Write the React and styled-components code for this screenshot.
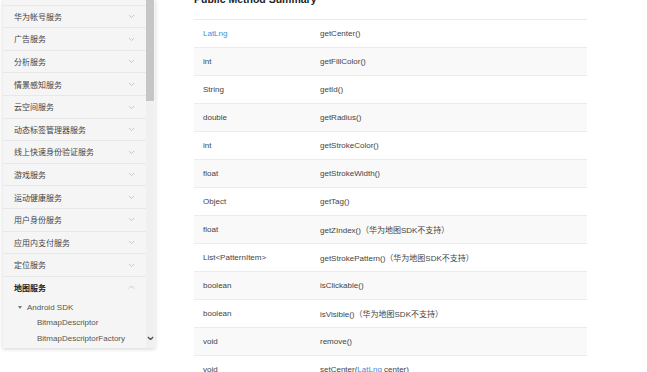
import styled, { createGlobalStyle } from 'styled-components';

const GlobalStyle = createGlobalStyle`
  html, body {
    margin: 0;
    padding: 0;
    background: #fff;
    font-family: "Liberation Sans", "Noto Sans CJK SC", sans-serif;
    overflow: hidden;
  }
`;

const Page = styled.div`
  display: flex;
  align-items: flex-start;
  width: 647px;
  height: 372px;
  overflow: hidden;
`;

const SidePanel = styled.aside`
  display: flex;
  width: 152px;
  height: 348px;
  margin-left: 3px;
  background: #f5f5f5;
  box-shadow: 0 1px 4px rgba(0, 0, 0, 0.18);
  overflow: hidden;
`;

const NavList = styled.ul`
  flex: 1;
  list-style: none;
  margin: -17px 0 0;
  padding: 0;
`;

const NavRow = styled.li`
  display: flex;
  align-items: center;
  justify-content: space-between;
  height: 22.6px;
  box-sizing: border-box;
  padding: 0 11px 0 11px;
  border-bottom: 1px solid ${(p) => (p.open ? 'transparent' : '#e8e8e8')};
  font-size: 8px;
  color: ${(p) => (p.open ? '#222' : '#444')};
  font-weight: ${(p) => (p.open ? 600 : 400)};
`;

const SubRow = styled.li`
  display: flex;
  align-items: center;
  height: 15.5px;
  padding-left: ${(p) => p.indent}px;
  font-size: 8px;
  color: #555;
  gap: 5px;
`;

const ScrollTrack = styled.div`
  display: flex;
  flex-direction: column;
  justify-content: space-between;
  align-items: center;
  width: 8px;
  background: #f0f0f0;
  margin-right: 1px;
`;

const Thumb = styled.div`
  width: 8px;
  height: 101px;
  background: #c6c6c6;
`;

const ArrowBox = styled.div`
  display: flex;
  margin-bottom: 8px;
`;

const Main = styled.main`
  width: 393px;
  margin-left: 39px;
`;

const Title = styled.h2`
  margin: -7px 0 14px;
  font-size: 10.5px;
  line-height: 12px;
  font-weight: 700;
  color: #222;
`;

const Table = styled.table`
  width: 100%;
  border-collapse: collapse;
  font-size: 8px;
  color: #444;
`;

const Row = styled.tr`
  height: 28px;
  border-top: 1px solid #ebebeb;
  background: ${(p) => (p.shade ? '#f9f9f9' : '#fff')};
`;

const TypeCell = styled.td`
  width: 117px;
  padding: 0 0 0 9px;
`;

const MethodCell = styled.td`
  padding: 0;
`;

const Link = styled.span`
  color: #3b8fd9;
`;

function Chevron({ up, color = '#bbb', w = 7, bold }) {
  return (
    <svg width={w} height={w / 2 + 1} viewBox="0 0 8 5">
      <path
        d={up ? 'M1 4 L4 1 L7 4' : 'M1 1 L4 4 L7 1'}
        fill="none"
        stroke={color}
        strokeWidth={bold ? 1.6 : 0.9}
      />
    </svg>
  );
}

function Triangle() {
  return (
    <svg width="4" height="3" viewBox="0 0 4 3">
      <path d="M0 0 L4 0 L2 3 Z" fill="#777" />
    </svg>
  );
}

const services = [
  '开发者服务',
  '华为帐号服务',
  '广告服务',
  '分析服务',
  '情景感知服务',
  '云空间服务',
  '动态标签管理器服务',
  '线上快速身份验证服务',
  '游戏服务',
  '运动健康服务',
  '用户身份服务',
  '应用内支付服务',
  '定位服务',
];

const NOTE = '（华为地图SDK不支持）';

const methods = [
  [<Link>LatLng</Link>, 'getCenter()'],
  ['int', 'getFillColor()'],
  ['String', 'getId()'],
  ['double', 'getRadius()'],
  ['int', 'getStrokeColor()'],
  ['float', 'getStrokeWidth()'],
  ['Object', 'getTag()'],
  ['float', 'getZIndex()' + NOTE],
  ['List<PatternItem>', 'getStrokePattern()' + NOTE],
  ['boolean', 'isClickable()'],
  ['boolean', 'isVisible()' + NOTE],
  ['void', 'remove()'],
  ['void', <>setCenter(<Link>LatLng</Link> center)</>],
];

export default function App() {
  return (
    <Page>
      <GlobalStyle />
      <SidePanel>
        <NavList>
          {services.map((s) => (
            <NavRow key={s}>
              <span>{s}</span>
              <Chevron />
            </NavRow>
          ))}
          <NavRow open>
            <span>地图服务</span>
            <Chevron up />
          </NavRow>
          <SubRow indent={15}>
            <Triangle />
            <span>Android SDK</span>
          </SubRow>
          <SubRow indent={34}>BitmapDescriptor</SubRow>
          <SubRow indent={34}>BitmapDescriptorFactory</SubRow>
        </NavList>
        <ScrollTrack>
          <Thumb />
          <ArrowBox>
            <Chevron color="#555" w={7} bold />
          </ArrowBox>
        </ScrollTrack>
      </SidePanel>
      <Main>
        <Title>Public Method Summary</Title>
        <Table>
          <tbody>
            {methods.map(([type, name], i) => (
              <Row key={i} shade={i % 2 === 1}>
                <TypeCell>{type}</TypeCell>
                <MethodCell>{name}</MethodCell>
              </Row>
            ))}
          </tbody>
        </Table>
      </Main>
    </Page>
  );
}
